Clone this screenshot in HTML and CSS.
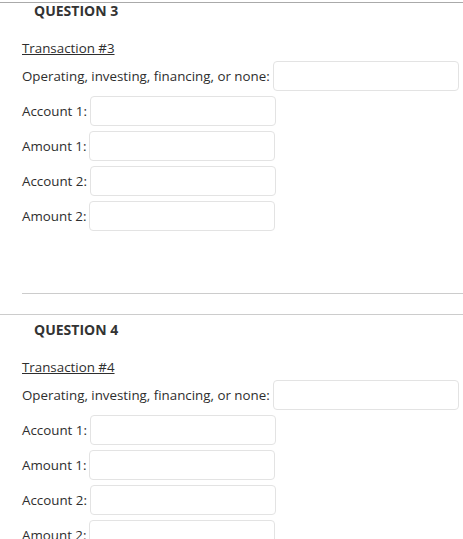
FILE: index.html
```html
<!DOCTYPE html>
<html>
<head>
<meta charset="utf-8">
<link rel="stylesheet" href="styles.css">
</head>
<body>
<div class="question question--first">
  <div class="q-header">QUESTION 3</div>
  <div class="q-body">
    <div class="transaction">Transaction #3</div>
    <div class="row row--first"><span class="label">Operating, investing, financing, or none:</span><input class="field" type="text"></div>
    <div class="row"><span class="label">Account 1:</span><input class="field" type="text"></div>
    <div class="row"><span class="label">Amount 1:</span><input class="field" type="text"></div>
    <div class="row"><span class="label">Account 2:</span><input class="field" type="text"></div>
    <div class="row"><span class="label">Amount 2:</span><input class="field" type="text"></div>
    <div class="divider"></div>
  </div>
</div>
<div class="question">
  <div class="q-header">QUESTION 4</div>
  <div class="q-body">
    <div class="transaction">Transaction #4</div>
    <div class="row row--first"><span class="label">Operating, investing, financing, or none:</span><input class="field" type="text"></div>
    <div class="row"><span class="label">Account 1:</span><input class="field" type="text"></div>
    <div class="row"><span class="label">Amount 1:</span><input class="field" type="text"></div>
    <div class="row"><span class="label">Account 2:</span><input class="field" type="text"></div>
    <div class="row"><span class="label">Amount 2:</span><input class="field" type="text"></div>
    <div class="divider"></div>
  </div>
</div>
</body>
</html>
```
FILE: styles.css
```css
html, body {
  margin: 0;
  padding: 0;
  background: #fff;
}
body {
  font-family: "Open Sans", "Liberation Sans", sans-serif;
  font-size: 13.33px;
  color: #2e2e2e;
  overflow: hidden;
}
.question {
  border-top: 1px solid #ccc;
}
.question--first {
  margin-top: 2px;
  border-top-color: #aaa;
}
.q-header {
  padding: 5px 0 0 34px;
  font-weight: 700;
  font-size: 14px;
  line-height: 20px;
  color: #333;
}
.question--first .q-header {
  padding-top: 0;
  margin-top: -2px;
}
.q-body {
  padding: 17px 0 0 22px;
}
.transaction {
  line-height: 20px;
  text-decoration: underline;
}
.row {
  display: flex;
  align-items: center;
  gap: 3px;
  margin-top: 5px;
}
.row--first {
  margin-top: 3px;
}
.label {
  white-space: nowrap;
  line-height: 20px;
}
.field {
  width: 186px;
  height: 30px;
  box-sizing: border-box;
  border: 1px solid #e3e3e3;
  border-radius: 4px;
  background: #fff;
  margin: 0;
  padding: 0 6px;
  font: inherit;
}
.divider {
  margin-top: 62px;
  border-top: 1px solid #ccc;
  margin-bottom: 20px;
}
```
